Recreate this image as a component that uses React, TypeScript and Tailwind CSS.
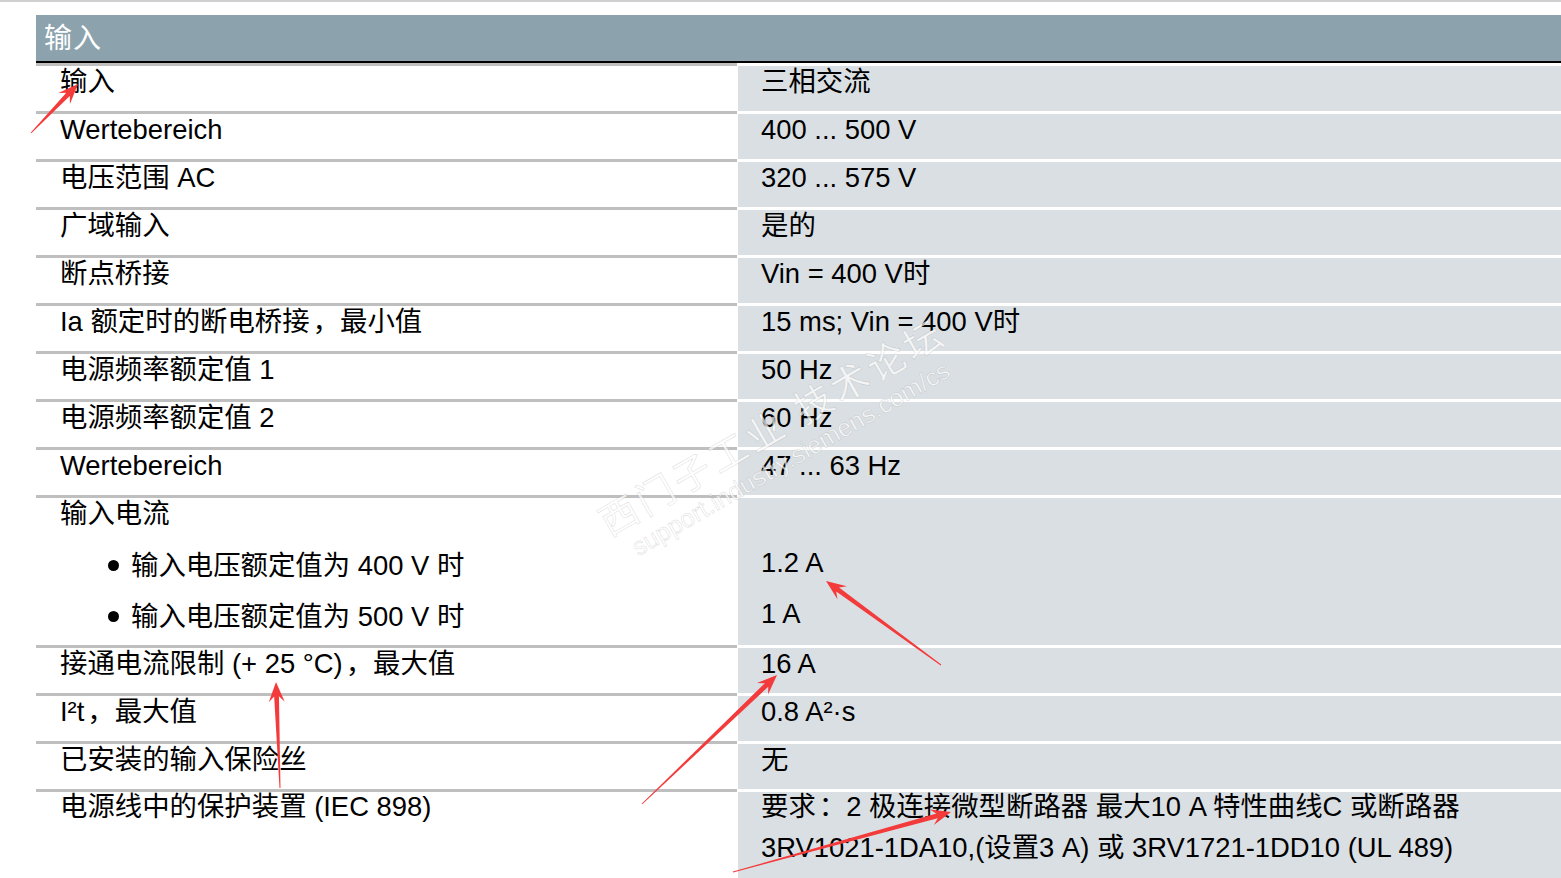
import React from 'react';

const font = { fontFamily: '"Liberation Sans", "Noto Sans CJK SC", Arial, sans-serif' };

type Row = { label: React.ReactNode; value: React.ReactNode };

const Comma = () => <span className="pl-[3px]">，</span>;

const rows: Row[] = [
  { label: '输入', value: '三相交流' },
  { label: 'Wertebereich', value: '400 ... 500 V' },
  { label: '电压范围 AC', value: '320 ... 575 V' },
  { label: '广域输入', value: '是的' },
  { label: '断点桥接', value: 'Vin = 400 V时' },
  { label: <>Ia 额定时的断电桥接<Comma />最小值</>, value: '15 ms; Vin = 400 V时' },
  { label: '电源频率额定值 1', value: '50 Hz' },
  { label: '电源频率额定值 2', value: '60 Hz' },
  { label: 'Wertebereich', value: '47 ... 63 Hz' },
];

const rowsAfter: Row[] = [
  { label: <>接通电流限制 (+ 25 °C)<Comma />最大值</>, value: '16 A' },
  { label: <>I²t<Comma />最大值</>, value: '0.8 A²·s' },
  { label: '已安装的输入保险丝', value: '无' },
];

const arrows = [
  { x1: 31, y1: 133, x2: 78, y2: 84 },
  { x1: 941, y1: 665, x2: 826, y2: 581 },
  { x1: 642, y1: 804, x2: 777, y2: 675 },
  { x1: 733, y1: 872, x2: 951, y2: 812 },
  { x1: 280, y1: 788, x2: 276, y2: 682 },
];

function arrowPoints(a: { x1: number; y1: number; x2: number; y2: number }) {
  const dx = a.x2 - a.x1;
  const dy = a.y2 - a.y1;
  const len = Math.hypot(dx, dy);
  const ux = dx / len;
  const uy = dy / len;
  const nx = -uy;
  const ny = ux;
  const L = 20;
  const W = 8;
  const bx = a.x2 - ux * L;
  const by = a.y2 - uy * L;
  const kx = a.x2 - ux * L * 0.72;
  const ky = a.y2 - uy * L * 0.72;
  const pts = [
    [a.x1 + nx * 0.5, a.y1 + ny * 0.5],
    [kx + nx * 2.4, ky + ny * 2.4],
    [bx + nx * W, by + ny * W],
    [a.x2, a.y2],
    [bx - nx * W, by - ny * W],
    [kx - nx * 2.4, ky - ny * 2.4],
    [a.x1 - nx * 0.5, a.y1 - ny * 0.5],
  ];
  return pts.map((p) => p.join(',')).join(' ');
}

function SimpleRow({ row }: { row: Row }) {
  return (
    <div className="flex h-[48px] gap-px">
      <div className="w-[701px] shrink-0 border-t-[3px] border-[#bfbfbf] bg-white pl-[24px] leading-[32px]">{row.label}</div>
      <div className="flex-1 border-t-[3px] border-white bg-[#dadfe3] pl-[23px] leading-[32px]">{row.value}</div>
    </div>
  );
}

export default function App() {
  return (
    <div className="relative h-[878px] w-[1561px] overflow-hidden bg-white text-[27.4px] text-black" style={font}>
      <div className="h-[15px] border-t-2 border-[#d0d0d0]" />
      <div className="ml-[36px]">
        <div className="h-[46px] bg-[#8ca3ae] pl-[8px] text-[28px] leading-[48px] tracking-[1px] text-white">输入</div>
        <div className="h-[2px] bg-black" />

        {rows.map((r, i) => (
          <SimpleRow key={i} row={r} />
        ))}

        <div className="flex h-[150px] gap-px">
          <div className="w-[701px] shrink-0 border-t-[3px] border-[#bfbfbf] bg-white">
            <div className="pl-[24px] leading-[32px]">输入电流</div>
            <div className="mt-[10px] flex flex-col">
              <div className="flex h-[51px] items-center pl-[72px]">
                <span className="mr-[12px] h-[11px] w-[11px] rounded-full bg-black" />
                <span>输入电压额定值为 400 V 时</span>
              </div>
              <div className="flex h-[51px] items-center pl-[72px]">
                <span className="mr-[12px] h-[11px] w-[11px] rounded-full bg-black" />
                <span>输入电压额定值为 500 V 时</span>
              </div>
            </div>
          </div>
          <div className="flex-1 border-t-[3px] border-white bg-[#dadfe3] pl-[23px]">
            <div className="h-[32px]" />
            <div className="mt-[7px] flex h-[51px] items-center">1.2 A</div>
            <div className="flex h-[51px] items-center">1 A</div>
          </div>
        </div>

        {rowsAfter.map((r, i) => (
          <SimpleRow key={i} row={r} />
        ))}

        <div className="flex h-[120px] gap-px">
          <div className="w-[701px] shrink-0 border-t-[3px] border-[#bfbfbf] bg-white pl-[24px] leading-[30px]">
            电源线中的保护装置 (IEC 898)
          </div>
          <div className="flex-1 border-t-[3px] border-white bg-[#dadfe3] pl-[23px]">
            <div className="leading-[30px] whitespace-nowrap">要求<span className="pl-[3px]">：</span>2 极连接微型断路器 最大10 A 特性曲线C 或断路器</div>
            <div className="leading-[52px] whitespace-nowrap">3RV1021-1DA10,(设置3 A) 或 3RV1721-1DD10 (UL 489)</div>
          </div>
        </div>
      </div>

      <div className="pointer-events-none absolute left-[780px] top-[440px] -translate-x-1/2 -translate-y-1/2 rotate-[-30deg] text-center whitespace-nowrap text-white/70 [-webkit-text-stroke:1px_rgba(0,0,0,0.1)]">
        <div className="text-[38px] leading-[42px] tracking-[4px]">西门子工业 技术论坛</div>
        <div className="text-[25px] leading-[28px]">support.industry.siemens.com/cs</div>
      </div>

      <svg className="pointer-events-none absolute left-0 top-0" width="1561" height="878">
        {arrows.map((a, i) => (
          <polygon key={i} points={arrowPoints(a)} fill="#f43b3b" />
        ))}
      </svg>
    </div>
  );
}
